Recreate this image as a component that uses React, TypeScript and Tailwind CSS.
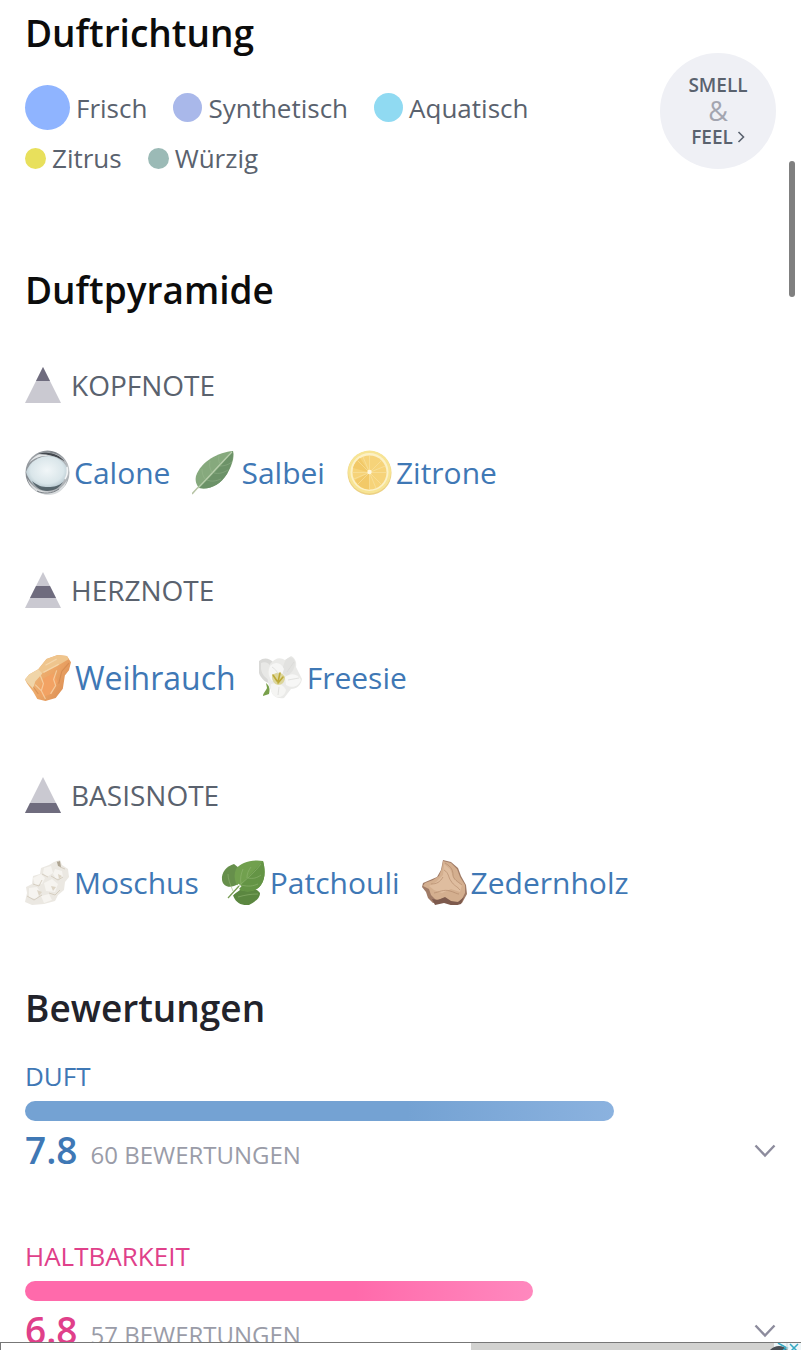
import React from 'react';

const accords = [
  { name: 'Frisch', dot: 'size-[45px] bg-[#8fb4ff]' },
  { name: 'Synthetisch', dot: 'size-[29px] bg-[#a9b8ea]' },
  { name: 'Aquatisch', dot: 'size-[29px] bg-[#90daf2]' },
  { name: 'Zitrus', dot: 'size-[21px] bg-[#e8e05c]' },
  { name: 'Würzig', dot: 'size-[21px] bg-[#9bbab6]' },
];

const Calone = () => (
  <svg viewBox="0 0 45 45" className="size-[45px] shrink-0" aria-hidden="true">
    <defs>
      <radialGradient id="drop" cx="50%" cy="42%" r="60%">
        <stop offset="0" stopColor="#f1f6f8" />
        <stop offset="0.65" stopColor="#dae6ea" />
        <stop offset="1" stopColor="#a9bbc4" />
      </radialGradient>
      <linearGradient id="rim" x1="0" y1="0" x2="1" y2="1">
        <stop offset="0" stopColor="#b4b8bc" />
        <stop offset="0.35" stopColor="#7d8288" />
        <stop offset="0.7" stopColor="#c3c7ca" />
        <stop offset="1" stopColor="#85898e" />
      </linearGradient>
    </defs>
    <circle cx="22.5" cy="22.5" r="22" fill="url(#rim)" />
    <path d="M4 13C9 5 17 2 26 3c7 1 12 5 15 10C35 8 28 5 21 6 14 6 8 9 4 13Z" fill="#e3e6e8" />
    <path d="M13 4C22 1 34 3 40 12 34 7 24 4 13 4Z" fill="#43484e" />
    <path d="M2 28c5 9 13 14 22 14 8 0 14-5 18-12-2 9-9 15-19 15C13 44 5 38 2 28Z" fill="#d9dcde" />
    <path d="M1 22C5 11 14 6 24 6s17 7 19 15c-3 11-10 19-20 19C12 40 4 32 1 22Z" fill="url(#drop)" />
    <path d="M7 31c6 5 10 6 16 6 6 0 11-1 15-5-3 5-8 9-16 9-6 0-12-4-15-10Z" fill="#45535b" opacity="0.85" />
    <path d="M12 41c6 3 15 3 22-2" fill="none" stroke="#62686e" strokeWidth="0.8" />
    <path d="M42 17c1 5 0 9-2 12" fill="none" stroke="#f2f4f5" strokeWidth="1.5" />
  </svg>
);

const Salbei = () => (
  <svg viewBox="0 0 45 45" className="size-[45px] shrink-0" aria-hidden="true">
    <path d="M0 44C8 35 12 31 17 27" fill="none" stroke="#b7c4a5" strokeWidth="1.6" />
    <path d="M41 1C27 2 9 11 4 26c-1 5 0 8 3 12 11 2 21-3 28-14 4-7 8-16 6-23Z" fill="#86a97d" />
    <path d="M41 1C42 9 38 18 35 24 28 35 18 40 7 38 20 26 31 13 41 1Z" fill="#6c9268" />
    <path d="M6 38C17 27 28 14 40 2" fill="none" stroke="#b9cfad" strokeWidth="1.2" />
    <path d="M14 30c-3-3-4-7-4-11m11 4c-3-3-4-7-3-12m11 4c-2-2-3-5-2-9M15 30c5 2 9 1 14-1m-7-6c5 1 9 0 14-3m-8-4c4 0 8-1 12-4" fill="none" stroke="#a3bf98" strokeWidth="0.7" opacity="0.5" />
  </svg>
);

const Zitrone = () => (
  <svg viewBox="0 0 45 45" className="size-[45px] shrink-0" aria-hidden="true">
    <circle cx="22.5" cy="23" r="22" fill="#ecd083" />
    <circle cx="22.5" cy="22" r="21.5" fill="#f7e494" />
    <circle cx="22.5" cy="22" r="19" fill="#fcf1c6" />
    <circle cx="22.5" cy="22.5" r="17" fill="#f6d379" />
    <path d="M22.500 22.500 8 30a17 17 0 0 0 14.500 9.500ZM22.500 22.500 6 18a17 17 0 0 1 7-10Z" fill="#f2c968" />
    <path d="M22.500 5.500v34M5.500 22.500h34M10.500 10.500l24 24M34.500 10.500l-24 24M16 6.800l13 31.400M6.800 29l31.400-13" fill="none" stroke="#fae6a8" strokeWidth="0.7" opacity="0.8" />
    <circle cx="22.5" cy="22" r="2.2" fill="#fff8e0" />
  </svg>
);

const Weihrauch = () => (
  <svg viewBox="0 0 45 45" className="size-[46px] shrink-0" aria-hidden="true">
    <defs>
      <linearGradient id="resin" x1="0" y1="0.2" x2="1" y2="0.8">
        <stop offset="0" stopColor="#e8bd83" />
        <stop offset="0.5" stopColor="#eda767" />
        <stop offset="1" stopColor="#d98b52" />
      </linearGradient>
    </defs>
    <path d="M0 24 4 19l9-5 8-10L32 0l9 1 4 6-2 8-4 5-2 13-7 9-10 3-8-2-4-7-6-8Z" fill="url(#resin)" />
    <path d="m13 14 8-10L32 0l9 1 2 3-12 7-12 6-9 3Z" fill="#efc58d" />
    <path d="m0 24 4-5 9-5 4 4-7 8-2 7-5-5Z" fill="#f0d5a8" />
    <path d="m18 23 10-5 4 8-6 12-9 3-3-7Z" fill="#f2a263" />
    <path d="m20 10 11-6M18 17l15-8M10 29l6 6 4 8M31 15l-3 9 2 6-5 8M15 20l3 8-2 7" fill="none" stroke="#f8dfb8" strokeWidth="1.2" opacity="0.65" />
    <path d="m43 8-7 8-3 12M8 31l5 7" fill="none" stroke="#c77b43" strokeWidth="1" opacity="0.5" />
  </svg>
);

const Freesie = () => (
  <svg viewBox="0 0 45 45" className="size-[45px] shrink-0" aria-hidden="true">
    <path d="M8 28c4 3 4 7 3 11l-6 2c0-3 3-5 4-8Z" fill="#78a04a" />
    <path d="M1 6c5-4 10-3 14 1l4 8-5 14C8 28 3 24 1 18Z" fill="#d9d9d7" />
    <path d="M3 8c4-2 8 0 10 4l1 14C8 24 4 20 3 14Z" fill="#e8e8e6" />
    <path d="M12 9C17 3 22 2 27 5l6-4c4 2 6 6 5 11l6 12c-1 6-5 10-11 10l-7 9c-7 1-12-2-13-8-4-7-5-17-1-26Z" fill="#eaeae8" />
    <path d="M27 6c4-5 8-5 10 1 0 6-2 10-8 14l-6-4Z" fill="#e2e2e0" />
    <path d="M12 11c5-5 11-4 14 3l-3 9-9 3c-4-5-4-10-2-15Z" fill="#f6f6f5" />
    <path d="M27 22c7-5 13-3 16 3-2 6-8 9-15 5Z" fill="#f7f7f6" />
    <path d="M13 29c6-2 12 0 15 6-1 5-5 8-10 7-4-2-6-7-5-13Z" fill="#f5f5f3" />
    <path d="M14 21c4-5 10-4 13 1 0 5-3 8-7 8-4-1-6-4-6-9Z" fill="#dcd69c" />
    <path d="m15 20 4 6m3-8-2 9m5-5-5 6" fill="none" stroke="#bda936" strokeWidth="1.6" strokeLinecap="round" />
    <path d="M14 12c3 2 5 4 6 7M36 7l-7 10M41 23l-11 2M20 40l1-8" fill="none" stroke="#d8d8d6" strokeWidth="0.7" />
  </svg>
);

const Moschus = () => (
  <svg viewBox="0 0 45 45" className="size-[45px] shrink-0" aria-hidden="true">
    <path d="m0 42 2-9-1-6 6-3 1-8 7-2 1-6 8-3 5-3 6-2 2 5 6 4 1 8-4 5-1 8-6 5-3 6-11 3-12 1Z" fill="#ebe8e2" />
    <path d="m8 18 8-4 4 4-3 6-7 1ZM19 8l7-2 2 7-6 4-4-4ZM30 9l7 2 1 6-7 2-3-5ZM4 28l8-1 4 6-5 6-7-2ZM19 23l8-4 6 5-3 8-9-1ZM16 36l8-2 3 6-8 3Z" fill="#f6f4f0" />
    <path d="m32 1 3 6 5 2M8 24l6 2 3-6M26 16l7 4 5-3M2 36l7 4 8-5M24 33l6 2 5-5M17 14l6 3" fill="none" stroke="#cfc7b8" strokeWidth="0.8" />
    <path d="m32 2 3-1 1 6-3-1Z" fill="#aea492" />
    <path d="m12 30 5 2-3 4ZM26 26l5 1-3 4ZM33 14l4 2-3 3Z" fill="#ddd5c6" />
  </svg>
);

const Patchouli = () => (
  <svg viewBox="0 0 45 45" className="size-[45px] shrink-0" aria-hidden="true">
    <path d="M13 4C6 6 0 12 1 20c1 6 6 8 12 6l7-3L18 8Z" fill="#668f4b" />
    <path d="M19 30c7-4 17-2 20 3 0 6-6 9-11 12-8 1-14-3-16-10Z" fill="#5b8740" />
    <path d="M42 1C31-1 19 3 15 9c-3 7-1 15 4 21 8 3 17 1 21-5 5-7 4-17 2-24Z" fill="#71a04e" />
    <path d="M42 1c-7 8-16 17-24 26l2 3c8 3 17 0 20-5 5-7 4-17 2-24Z" fill="#649445" />
    <path d="M7 38 19 25" stroke="#fff" strokeWidth="4" />
    <path d="M8 37 20 24c8-7 14-12 20-20M12 31C9 24 7 19 7 14M20 24c-1-6 0-10 2-15M20 25c8 2 12 1 17-1M27 18c5 1 9 0 13-3M26 18c0-4 1-7 4-11M17 37c7-2 13-3 20-3" fill="none" stroke="#94b874" strokeWidth="0.7" opacity="0.8" />
    <path d="M7 38 18 26" stroke="#789c55" strokeWidth="1.2" />
  </svg>
);

const Zedernholz = () => (
  <svg viewBox="0 0 45 45" className="size-[45px] shrink-0" aria-hidden="true">
    <path d="m21 0 8 2 7 6 3 8 5 9 1 9-5 9-8 2-10-3-11 1-5-5-2-6-4-5 1-4 7-3 7-3 4-7Z" fill="#a07b66" />
    <path d="m21 1 8 2 6 6 3 8 5 8v8l-4 8-7 2-9-5-9 2-5-5-2-6-6-3 2-3 8-3 6-4 3-8Z" fill="#d4af8f" />
    <path d="m22 4 6 5 4 10 8 6-2 7-9-3-9 4-8-3-5-4 7-4 7-7Z" fill="#dfbd9f" />
    <path d="M23 3c7 4 8 8 8 12s5 7 9 10M22 10c5 3 4 7 7 11 3 5 6 5 9 9M9 24c6 0 9-2 12-7M12 33c5-1 10-4 16-2 4 1 7 3 9 3" fill="none" stroke="#b08769" strokeWidth="0.8" opacity="0.8" />
    <path d="m10 39 6 1 7-3 6 4 7 1 6-5-3 7-7 2-10-3-9 2Z" fill="#7d5a4d" />
  </svg>
);

const levels = [
  {
    title: 'KOPFNOTE',
    band: 'M18 0 25 14H11Z',
    notes: [
      { name: 'Calone', Icon: Calone, size: 'text-[30px]' },
      { name: 'Salbei', Icon: Salbei, size: 'text-[30px]' },
      { name: 'Zitrone', Icon: Zitrone, size: 'text-[30px]' },
    ],
  },
  {
    title: 'HERZNOTE',
    band: 'M11 14H25L31 26H5Z',
    notes: [
      { name: 'Weihrauch', Icon: Weihrauch, size: 'text-[32px]' },
      { name: 'Freesie', Icon: Freesie, size: 'text-[30px]' },
    ],
  },
  {
    title: 'BASISNOTE',
    band: 'M5 26H31L36 36H0Z',
    notes: [
      { name: 'Moschus', Icon: Moschus, size: 'text-[30px]' },
      { name: 'Patchouli', Icon: Patchouli, size: 'text-[30px]' },
      { name: 'Zedernholz', Icon: Zedernholz, size: 'text-[30px]' },
    ],
  },
];

const ratings = [
  {
    label: 'DUFT',
    score: '7.8',
    votes: 60,
    percent: 78.4,
    text: 'text-[#3f78b5]',
    bar: 'from-[#74a2d3] to-[#8bb2df]',
  },
  {
    label: 'HALTBARKEIT',
    score: '6.8',
    votes: 57,
    percent: 67.7,
    text: 'text-[#e0408a]',
    bar: 'from-[#ff6aab] to-[#ff88be]',
  },
];

const Heading = ({ children, className = 'text-[#0c0c0c]' }: { children: React.ReactNode; className?: string }) => (
  <h2 className={`text-[37px] leading-[48px] font-semibold ${className}`}>{children}</h2>
);

const App: React.FC = () => {
  return (
    <div className="relative h-screen overflow-hidden bg-white font-['Open_Sans',sans-serif] text-[#5a626e]">
      <main className="px-[25px] pt-[9px]">
        <section className="flex items-start justify-between gap-6">
          <div>
            <Heading>Duftrichtung</Heading>
            <ul className="mt-7 flex flex-wrap items-center gap-x-[26px] gap-y-[10px] text-[26px] leading-[36px]">
              {accords.map((accord) => (
                <li key={accord.name} className="flex items-center gap-[6px]">
                  <span className={`shrink-0 rounded-full ${accord.dot}`} />
                  {accord.name}
                </li>
              ))}
            </ul>
          </div>
          <button
            type="button"
            className="mt-11 flex size-[116px] shrink-0 flex-col items-center justify-center rounded-full bg-[#eff0f5] text-[19px] leading-[26px] font-semibold"
          >
            <span>SMELL</span>
            <span className="text-[27px] font-normal text-[#a3a5b0]">&amp;</span>
            <span className="flex items-center gap-1">
              FEEL
              <svg viewBox="0 0 8 12" className="h-3 w-2" fill="none" stroke="currentColor" strokeWidth="1.6" aria-hidden="true">
                <path d="m1.500 1 5 5-5 5" />
              </svg>
            </span>
          </button>
        </section>

        <section className="mt-[90px]">
          <Heading>Duftpyramide</Heading>
          <div className="mt-[53px] flex flex-col gap-[77px]">
            {levels.map((level) => (
              <div key={level.title} className="flex flex-col gap-[47px]">
                <h3 className="flex items-center gap-[10px] text-[28px] leading-[36px]">
                  <svg viewBox="0 0 36 36" className="size-9 shrink-0" aria-hidden="true">
                    <path d="M18 0 36 36H0Z" fill="#cac9d1" />
                    <path d={level.band} fill="#6f6c7e" />
                  </svg>
                  {level.title}
                </h3>
                <div className="flex flex-wrap items-center gap-x-[22px] text-[#3f78b5]">
                  {level.notes.map(({ name, Icon, size }) => (
                    <a key={name} href="#" className={`flex h-[45px] items-center gap-1 leading-[45px] ${size}`}>
                      <Icon />
                      {name}
                    </a>
                  ))}
                </div>
              </div>
            ))}
          </div>
        </section>

        <section className="mt-[79px]">
          <Heading className="text-[#22232b]">Bewertungen</Heading>
          <div className="mt-[26px] flex flex-col gap-[59px]">
            {ratings.map((rating) => (
              <div key={rating.label}>
                <h3 className={`text-[26px] leading-[36px] ${rating.text}`}>{rating.label}</h3>
                <div
                  className={`mt-[7px] h-5 rounded-full bg-linear-to-r from-65% ${rating.bar}`}
                  style={{ width: `${rating.percent}%` }}
                />
                <div className="mt-[5px] flex items-center justify-between">
                  <p className="flex items-baseline gap-[13px] leading-[48px]">
                    <span className={`text-[37px] font-semibold ${rating.text}`}>{rating.score}</span>
                    <span className="text-[24px] text-[#9a9ca8]">{rating.votes} BEWERTUNGEN</span>
                  </p>
                  <button type="button" className="mb-1" aria-label={`${rating.label} anzeigen`}>
                    <svg viewBox="0 0 22 14" className="h-[14px] w-[22px]" fill="none" stroke="#8d8c9d" strokeWidth="2.4" aria-hidden="true">
                      <path d="m1.500 1.500 9.500 10 9.500-10" />
                    </svg>
                  </button>
                </div>
              </div>
            ))}
          </div>
        </section>
      </main>

      {/* Scroll indicator */}
      <div className="absolute top-[161px] right-[6px] h-[136px] w-[6px] rounded-full bg-[#808080]" />

      {/* Sticky ad, only its top edge is open */}
      <aside className="absolute inset-x-0 bottom-0 flex h-2 justify-end overflow-hidden border-t border-l border-[#777] bg-white">
        <div className="h-full w-[330px] bg-[#d2d2d0]">
          <svg viewBox="0 0 330 7" className="h-[7px] w-full" aria-hidden="true">
            <path d="M303 0h27v7h-27Z" fill="#eef6f8" />
            <circle cx="308" cy="15" r="12" fill="#4a4f55" />
            <path d="m307 0 9 5-4 2M319 1l8 8M327 1l-8 8" fill="none" stroke="#35a9c4" strokeWidth="1.5" />
            <path d="M316 0v7" stroke="#c9d5d8" />
          </svg>
        </div>
      </aside>
    </div>
  );
};

export default App;
